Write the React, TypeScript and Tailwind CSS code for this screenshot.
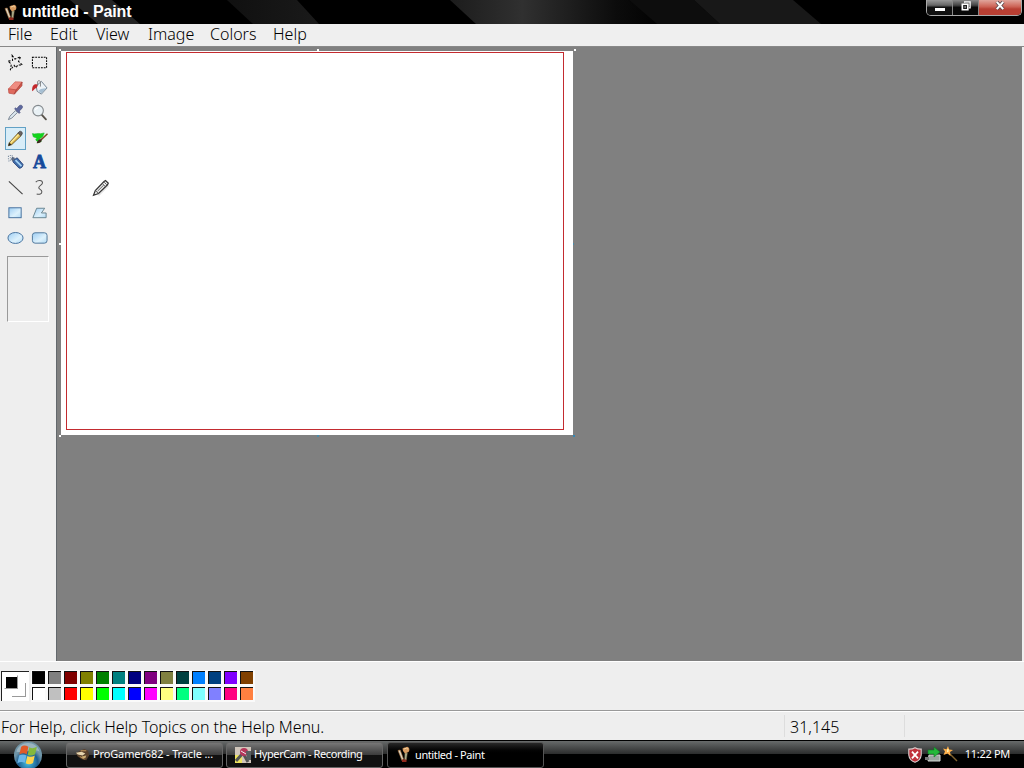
import type { ReactNode } from 'react'
import clsx from 'clsx'

const menuItems = [
  { label: 'File', className: 'w-[42px]' },
  { label: 'Edit', className: 'w-[46px]' },
  { label: 'View', className: 'w-[52px]' },
  { label: 'Image', className: 'w-[62px]' },
  { label: 'Colors', className: 'w-[63px]' },
  { label: 'Help', className: 'w-[50px]' },
]

const topColors = ['#000000', '#808080', '#800000', '#808000', '#008000', '#008080', '#000080', '#800080', '#808040', '#004040', '#0080ff', '#004080', '#8000ff', '#804000']
const bottomColors = ['#ffffff', '#c0c0c0', '#ff0000', '#ffff00', '#00ff00', '#00ffff', '#0000ff', '#ff00ff', '#ffff80', '#00ff80', '#80ffff', '#8080ff', '#ff0080', '#ff8040']

// Each tool is drawn on an 18x18 grid
const tools: { name: string; art: ReactNode }[] = [
  {
    name: 'Free-form select',
    art: <path d="M5.5 1.5 8.5 5.4 14.5 2.8 12.2 7.8 16.3 11.6 11.4 11.6 9.6 14.5 7.5 12 3.5 17 4.6 10.8 1 7.6 5.9 6.8Z" fill="none" stroke="#000" strokeWidth="1.1" strokeDasharray="2.4 1.6" />,
  },
  {
    name: 'Select',
    art: <rect x="1.5" y="3.5" width="15" height="11" fill="none" stroke="#000" strokeWidth="1.1" strokeDasharray="2 1" />,
  },
  {
    name: 'Eraser',
    art: (
      <>
        <path d="M1.5 10.5 8.5 3 16 3.2 9.8 11.5Z" fill="#ef8c81" stroke="#d0665b" strokeWidth=".7" />
        <path d="M1.5 10.5 9.8 11.5 7.8 16 2 15Z" fill="#df6a5e" stroke="#b9483f" strokeWidth=".7" />
        <path d="M9.8 11.5 16 3.2 15.8 7.2 7.8 16Z" fill="#cf5549" stroke="#a73c35" strokeWidth=".7" />
      </>
    ),
  },
  {
    name: 'Fill',
    art: (
      <>
        <path d="M5.5 7.5 11 2.5 17 9.5 11 16 6.5 13Z" fill="#edf3f7" stroke="#71818f" />
        <path d="M10.5 10.5 16.5 9.5 11 15.3 7.8 12.5Z" fill="#a6bfd3" />
        <path d="M7 7V3.2C7 1.2 10 1.2 10 3.5V8" fill="none" stroke="#666" strokeWidth=".8" />
        <path d="M6.5 5.8C3 5 1 7 1.2 13 3 12 3.6 9.8 5.8 9.5L7 7.5Z" fill="#c4292d" />
      </>
    ),
  },
  {
    name: 'Pick color',
    art: (
      <>
        <path d="M9 7 3 13 1.5 16.5 5 15 11 9Z" fill="#dce7ee" stroke="#6d7988" strokeWidth=".9" />
        <path d="M8 5 12.8 10 14 8.8 12.9 7.6 16 4.5C17.4 2 15 .4 13 1.8L10.2 5 9.2 4Z" fill="#5e699f" stroke="#3a4272" strokeWidth=".6" />
      </>
    ),
  },
  {
    name: 'Magnifier',
    art: (
      <>
        <path d="M11 11 15.8 16.2" stroke="#57524a" strokeWidth="2" strokeLinecap="round" />
        <circle cx="7.5" cy="7" r="5.6" fill="#e9f1f5" stroke="#84898d" strokeWidth="1.2" />
        <path d="M4.5 6.3C5 4.7 6 4 7.4 4" stroke="#fff" strokeWidth="1.3" fill="none" />
      </>
    ),
  },
  {
    name: 'Pencil',
    art: (
      <>
        <path d="M2.3 13.5 12 3 15 6 5 15.5 1.5 16.7Z" fill="#e2bf55" stroke="#564218" strokeWidth=".8" />
        <path d="M4 13.4 13 4" stroke="#fff1a5" strokeWidth="1.2" />
        <path d="M11.5 3.3 13.4 1.4C15 .7 17 2.6 16 4.6L14.3 6.2Z" fill="#6a6262" stroke="#333" strokeWidth=".6" />
        <path d="M1.5 16.7 2.4 13.5 4.8 15.5Z" fill="#222" />
      </>
    ),
  },
  {
    name: 'Brush',
    art: (
      <>
        <path d="M1.5 4.8C4 6 7 4 10 5L14 4.2 12.5 8 8.5 11 11 13C8.5 14.5 5.5 13 5 11L6.5 9.8 2.4 8.3Z" fill="#13d51b" stroke="#18b92a" strokeWidth=".6" />
        <path d="M10.5 11.5 17.5 5" stroke="#7b4b25" strokeWidth="1.6" />
        <path d="M6 15C6.5 12 9 10 11.2 11 11.8 13.5 9.3 15 6 15Z" fill="#3c2b1f" />
      </>
    ),
  },
  {
    name: 'Airbrush',
    art: (
      <>
        <path d="M7.5 6 10.8 4 17 11C17 13.5 14.8 15.5 12.8 15L6.2 8.3Z" fill="#3f6ba8" stroke="#1c366d" strokeWidth=".8" />
        <path d="M9 6.5 15.3 12.8" stroke="#a6d4f6" strokeWidth="1.8" />
        <path d="M5.8 8 8.6 4.2 5.6 3 4.2 5.2Z" fill="#5b6980" />
        <path d="M1 2.5h1M3 1.5h1M1 5h1M3 4h1M1.5 7.5h1M5 2h1M3 6.5h1" stroke="#6d8198" strokeWidth="1.1" />
      </>
    ),
  },
  { name: 'Text', art: null },
  { name: 'Line', art: <path d="M2 2.5 16.5 16" stroke="#444" strokeWidth="1.2" /> },
  {
    name: 'Curve',
    art: <path d="M5 3.2C7.5.8 12 1 12.2 4 12.2 6.5 8.2 7 8.2 9.2 8.2 11 11.5 11 11.5 13.4 11.5 15.8 9 16.8 6 15.8" fill="none" stroke="#555" strokeWidth="1.1" />,
  },
  { name: 'Rectangle', art: <rect x="2" y="4" width="13" height="10.5" fill="url(#shape)" stroke="#426e9c" /> },
  { name: 'Polygon', art: <path d="M2 14.5 6 4.5H14.5L11 9.5H16V14.5Z" fill="url(#shape)" stroke="#65828d" /> },
  { name: 'Ellipse', art: <ellipse cx="9" cy="9.5" rx="8" ry="5.8" fill="url(#shape)" stroke="#426e9c" /> },
  { name: 'Rounded rectangle', art: <rect x="1.5" y="4" width="15.5" height="11" rx="2.8" fill="url(#shape)" stroke="#4c7498" /> },
]

function PaintIcon({ className }: { className?: string }) {
  return (
    <svg viewBox="0 0 16 17" className={className}>
      <path d="M2 4.5 4.2 4 7.5 13 6.2 15Z" fill="#ddd7c4" stroke="#a76b36" strokeWidth=".6" />
      <path d="M9 7H11.3L10.3 14 8.6 15Z" fill="#b4b795" stroke="#776a49" strokeWidth=".6" />
      <path d="M6.5 2.5C8.5 .8 9.5 2 11 .7 13.5 1 14 4 12.5 6L9 7.5 7 5Z" fill="#d69a60" />
      <path d="M8 3 10.5 2.2 12 3.2" stroke="#f2d2a1" fill="none" />
      <path d="M6 13.5h4.5V16H6Z" fill="#8f291d" />
    </svg>
  )
}

function TitleBar() {
  return (
    <header className="relative flex h-6 shrink-0 items-start justify-between overflow-hidden bg-black">
      <svg viewBox="0 0 1024 24" className="absolute inset-0 h-6 w-full">
        <defs>
          <linearGradient id="streak">
            <stop offset="0" stopColor="#1c1c1c" />
            <stop offset=".35" stopColor="#303030" />
            <stop offset=".8" stopColor="#0c0c0c" />
            <stop offset="1" stopColor="#020202" />
          </linearGradient>
          <linearGradient id="faint">
            <stop offset="0" stopColor="#101010" />
            <stop offset="1" stopColor="#1a1a1a" />
          </linearGradient>
        </defs>
        <path d="M70 0h42l28 24H98Z" fill="#242424" />
        <path d="M227 0h70l22 24h-66Z" fill="url(#faint)" />
        <path d="M450 0h179l28 24H476Z" fill="url(#streak)" />
        <path d="M629 0h65l26 24h-63Z" fill="#0d0d0d" />
        <path d="M694 0h99l28 24H720Z" fill="#181818" />
      </svg>
      <div className="relative flex h-6 items-center">
        <PaintIcon className="ml-[3px] h-[17px] w-4" />
        <h1 className="ml-[3px] text-base leading-6 font-bold tracking-[-0.1px] text-white">untitled - Paint</h1>
      </div>
      <div className="relative mr-[2px] flex h-4 w-24 overflow-hidden rounded-b-[5px] border border-t-0 border-[#aaa] bg-[#222]">
        <button aria-label="Minimize" className="flex w-[26px] items-end justify-center border-r border-[#888] bg-linear-to-b from-[#999] via-[#666] via-35% to-[#111] to-50% pb-1">
          <span className="h-[3px] w-[10px] bg-white" />
        </button>
        <button aria-label="Restore" className="flex w-[26px] justify-center border-r border-[#888] bg-linear-to-b from-[#888] via-[#444] via-35% to-[#080808] to-50%">
          <svg viewBox="0 0 12 12" className="mt-px h-[11px] w-3">
            <path d="M4.5 2V1h6v6.5H9" fill="none" stroke="#fff" strokeWidth="1.4" />
            <path d="M2 3.5h6v6H2Z" fill="#222" stroke="#fff" strokeWidth="1.8" />
            <path d="M4.3 6h1.5v1.2H4.3Z" fill="#fff" />
          </svg>
        </button>
        <button aria-label="Close" className="flex flex-1 justify-center bg-linear-to-b from-[#e0a59c] via-[#cc6255] via-45% to-[#b83f33] to-60%">
          <svg viewBox="0 0 12 12" className="h-[11px] w-3">
            <path d="m2.5 2 7 8m0-8-7 8" stroke="#554548" strokeWidth="4" />
            <path d="m2.5 2 7 8m0-8-7 8" stroke="#fff" strokeWidth="2.3" />
          </svg>
        </button>
      </div>
    </header>
  )
}

function Toolbox() {
  return (
    <aside className="flex w-14 shrink-0 flex-col bg-[#eeeeee] pt-[3px] pl-[3px]">
      <svg className="absolute h-0 w-0">
        <defs>
          <linearGradient id="shape" x2="1" y2="1">
            <stop offset="0" stopColor="#9dcdf3" />
            <stop offset=".6" stopColor="#ddf1fc" />
            <stop offset="1" stopColor="#b1daf5" />
          </linearGradient>
        </defs>
      </svg>
      <div className="grid grid-cols-[25px_23px]">
        {tools.map((tool) => (
          <button key={tool.name} title={tool.name} className="flex h-[25px] items-center justify-center">
            <span
              className={clsx(
                'flex h-[23px] w-[21px] items-center justify-center border',
                tool.name === 'Pencil' ? 'mt-[2px] border-[#62a1c5] bg-[#d8edf8]' : 'border-transparent'
              )}
            >
              {tool.art ? (
                <svg viewBox="0 0 18 18" className="h-[17px] w-[17px] shrink-0">{tool.art}</svg>
              ) : (
                <span className="font-['Liberation_Serif',serif] text-lg leading-[21px] font-bold text-[#164a9b] [-webkit-text-stroke:0.8px_#164a9b]">A</span>
              )}
            </span>
          </button>
        ))}
      </div>
      <div className="mt-[6px] ml-1 h-[66px] w-[42px] border border-t-[#999] border-r-white border-b-white border-l-[#999]" />
    </aside>
  )
}

// Resize handles around the drawing area, in canvas coordinates
function Handles() {
  return (
    <>
      <i className="absolute -top-[2px] -left-[2px] h-[2px] w-[2px] bg-white" />
      <i className="absolute -top-[2px] left-[256px] h-[2px] w-[2px] bg-white" />
      <i className="absolute -top-[2px] left-[513px] h-[2px] w-[2px] bg-white" />
      <i className="absolute top-[192px] -left-[2px] h-[2px] w-[2px] bg-white" />
      <i className="absolute top-[384px] -left-[2px] h-[2px] w-[2px] bg-white" />
      <i className="absolute top-[192px] left-[512px] h-[2px] w-px bg-[#4d8ba8]" />
      <i className="absolute top-[384px] left-[256px] h-[2px] w-[2px] bg-[#4d8ba8]" />
      <i className="absolute top-[384px] left-[512px] h-[2px] w-[2px] bg-[#3487b4]" />
    </>
  )
}

function Workspace() {
  return (
    <main className="min-w-0 flex-1 border-l border-[#63686c] bg-[#808080] pt-1 pl-1">
      <div className="relative h-[384px] w-[512px] bg-white pt-px pl-[5px]">
        <div className="h-[378px] w-[498px] border border-[#c32b30]" />
        <Handles />
        <svg viewBox="0 0 18 18" className="absolute top-[128px] left-[31px] h-[18px] w-[18px]">
          <path d="m6 16 10-10" stroke="#e4e4e4" strokeWidth="3" />
          <path d="M1.5 16.3 3.3 11.5 12 2.5 13.5 1.5 16.3 4.2 15.5 5.8 6.5 14.5Z" fill="#eee" stroke="#333" strokeWidth="1.2" />
          <path d="m3.3 11.5 3.2 3M10.3 4.6l3.4 3.3M12.2 3.2l2.6 2.6M5.5 12.2l6.2-6.1" stroke="#555" strokeWidth=".9" />
        </svg>
      </div>
    </main>
  )
}

function Swatch({ color }: { color: string }) {
  return (
    <button aria-label={color} className="h-4 w-4 pt-px pr-[2px] pb-[2px] pl-px">
      <span className="block h-[13px] w-[13px] border-t border-l border-[#111]" style={{ backgroundColor: color }} />
    </button>
  )
}

function Palette() {
  return (
    <section className="flex h-[49px] shrink-0 items-start border-t border-white bg-[#eeeeee] pt-2 pl-px">
      <div className="relative mt-px h-[30px] w-7 border-t border-l border-[#222] bg-white">
        <div className="absolute top-[11px] left-[10px] h-[14px] w-[14px] border-r border-b border-[#999] bg-white" />
        <div className="absolute top-[3px] left-[2px] h-[14px] w-[14px] border border-t-white border-r-[#999] border-b-[#999] border-l-white bg-white p-px">
          <div className="h-[11px] w-[11px] bg-black" />
        </div>
      </div>
      <div className="ml-[2px] grid grid-cols-[repeat(14,16px)] bg-[#fafafa]">
        {topColors.map((color) => <Swatch key={color} color={color} />)}
        {bottomColors.map((color) => <Swatch key={color} color={color} />)}
      </div>
    </section>
  )
}

function StatusBar() {
  return (
    <footer className="flex h-[30px] shrink-0 border-t border-[#999] bg-[#eeeeee] text-base leading-[31px] font-light text-black">
      <div className="flex flex-1 border-t border-white">
        <p className="w-[784px] pl-px tracking-[-0.07px]">For Help, click Help Topics on the Help Menu.</p>
        <p className="my-[3px] w-[120px] border-l border-[#ddd] pl-[5px] leading-[25px]">31,145</p>
        <p className="my-[3px] flex-1 border-l border-[#ddd]" />
      </div>
    </footer>
  )
}

interface TaskButtonProps {
  icon: ReactNode
  label: string
  labelClass: string
  active?: boolean
}

function TaskButton({ icon, label, labelClass, active }: TaskButtonProps) {
  return (
    <button
      className={clsx(
        'flex h-[26px] w-[157px] items-center rounded-[3px] border pl-2 text-[11px] text-white',
        active
          ? 'border-[#555] bg-linear-to-b from-[#292929] to-black to-50%'
          : 'border-[#666] bg-linear-to-b from-[#777] via-[#3d3d3d] via-49% to-[#111] to-50%'
      )}
    >
      {icon}
      <span className={clsx('ml-[3px] whitespace-nowrap', labelClass)}>{label}</span>
    </button>
  )
}

function Taskbar() {
  return (
    <nav className="flex h-7 shrink-0 items-center overflow-hidden border-t border-black bg-linear-to-b from-[#686b6b] via-[#2b2c2c] via-49% to-black to-50%">
      <button aria-label="Start" className="ml-3 h-[30px] w-8">
        <svg viewBox="0 0 32 32" className="h-[31px] w-8">
          <defs>
            <radialGradient id="orb" cy=".75">
              <stop offset="0" stopColor="#47c4e7" />
              <stop offset=".7" stopColor="#1d5e91" />
              <stop offset="1" stopColor="#7095a7" />
            </radialGradient>
          </defs>
          <circle cx="16" cy="16" r="14.5" fill="url(#orb)" />
          <path d="M4 12C7 0 25 0 28 12 20 8 12 14 4 12Z" fill="#b4c5cc" opacity=".65" />
          <path d="M9 7C11.5 5 14 5.8 16.4 7L14.7 14.7C12 13.4 9.5 13.5 7 15Z" fill="#e15a28" />
          <path d="M17.4 7.6C20 9 22.3 8.6 25.2 7L23.3 14.8C20.6 16.4 18 16.3 15.7 15.1Z" fill="#85b93c" />
          <path d="M6.8 16C9.5 14.6 12 14.8 14.4 16L12.6 23.6C10.2 22.3 7.8 22.6 5 24Z" fill="#6bb5e8" />
          <path d="M15.4 16.4C18 17.7 20.4 17.5 23 16L21.2 23.8C18.4 25.5 15.8 25.3 13.6 24Z" fill="#ffd34b" />
        </svg>
      </button>
      <div className="ml-[22px] flex gap-[3px]">
        <TaskButton
          label="ProGamer682 - Tracle ..."
          labelClass="tracking-[-0.13px]"
          icon={
            <svg viewBox="0 0 16 16" className="h-[15px] w-[15px]">
              <path d="M1 7 5 4 10 2 14 4 15 9 12 14 7 13 3 10Z" fill="#58402c" />
              <path d="M1 6 7 5 11 7 8 9 3 8Z" fill="#e6d4ae" />
              <path d="m7 10 5-1-1 3H8Z" fill="#ccad72" />
              <path d="M6 4 12 4M5 10 10 13" stroke="#c69b60" />
            </svg>
          }
        />
        <TaskButton
          label="HyperCam - Recording"
          labelClass="tracking-[-0.4px]"
          icon={
            <svg viewBox="0 0 16 16" className="h-4 w-4">
              <path d="M0 0h16v16H0Z" fill="#d1c6bb" />
              <path d="M0 8h7v8H0Z" fill="#eee45e" />
              <path d="m1 14 7-8 5 9" stroke="#555" strokeWidth="3" fill="none" />
              <circle cx="9" cy="5" r="4" fill="#b6365b" />
              <path d="M11 4h5v9h-4Z" fill="#585f61" />
              <path d="m6 4 5 3" stroke="#eee" />
            </svg>
          }
        />
        <div className="ml-px">
          <TaskButton active label="untitled - Paint" labelClass="pt-px tracking-[-0.4px]" icon={<PaintIcon className="h-[17px] w-4" />} />
        </div>
      </div>
      <div className="ml-auto flex items-center gap-[2px] pr-[14px] text-[11px] text-white">
        <svg viewBox="0 0 16 17" className="h-4 w-4">
          <path d="M8 .8C10 2 12 2.4 14.6 2.3V8.5C14.2 12.5 11.5 15 8 16.3 4.5 15 1.8 12.5 1.4 8.5V2.3C4 2.4 6 2 8 .8Z" fill="#c0303b" stroke="#d8cccc" strokeWidth="1.2" />
          <path d="m4.8 5 6.4 7m0-7-6.4 7" stroke="#fff" strokeWidth="1.9" />
        </svg>
        <svg viewBox="0 0 17 16" className="-ml-px h-4 w-[17px]">
          <path d="M5 8h11v6H4Z" fill="#9aa5a0" stroke="#d5d8d5" />
          <path d="M1 10h4v3H1Z" fill="#777" />
          <path d="M4 3h6V0l6 5-6 5V7H4Z" fill="#23b83a" stroke="#117a26" strokeWidth=".6" />
        </svg>
        <svg viewBox="0 0 16 16" className="-mt-[2px] mr-px -ml-px h-4 w-4">
          <path d="m7 7 8 8" stroke="#80622e" strokeWidth="1.5" />
          <path d="m6 0 1.2 3.5L11 4 8 6l.5 4L5.5 7.5 1.5 9 3 5.5 1 2.5l3.5.7Z" fill="#ffb04d" />
          <path d="m6 3-.3 3" stroke="#fff3b4" strokeWidth="1.5" />
        </svg>
        <time className="ml-1 whitespace-nowrap tracking-[-0.3px]">11:22 PM</time>
      </div>
    </nav>
  )
}

export default function App() {
  return (
    <div className="flex h-screen w-screen flex-col overflow-hidden bg-[#eeeeee] font-['Noto_Sans',sans-serif]">
      <div className="font-['Liberation_Sans',sans-serif]">
        <TitleBar />
      </div>
      <nav className="flex h-[22px] shrink-0 items-start bg-[#efefef] pl-[8px] text-base leading-[20px] font-light text-black">
        {menuItems.map((item) => (
          <button key={item.label} className={clsx('text-left', item.className)}>{item.label}</button>
        ))}
      </nav>
      <div className="flex min-h-0 flex-1 border-t border-[#888] pr-[2px]">
        <Toolbox />
        <Workspace />
      </div>
      <Palette />
      <StatusBar />
      <Taskbar />
    </div>
  )
}
